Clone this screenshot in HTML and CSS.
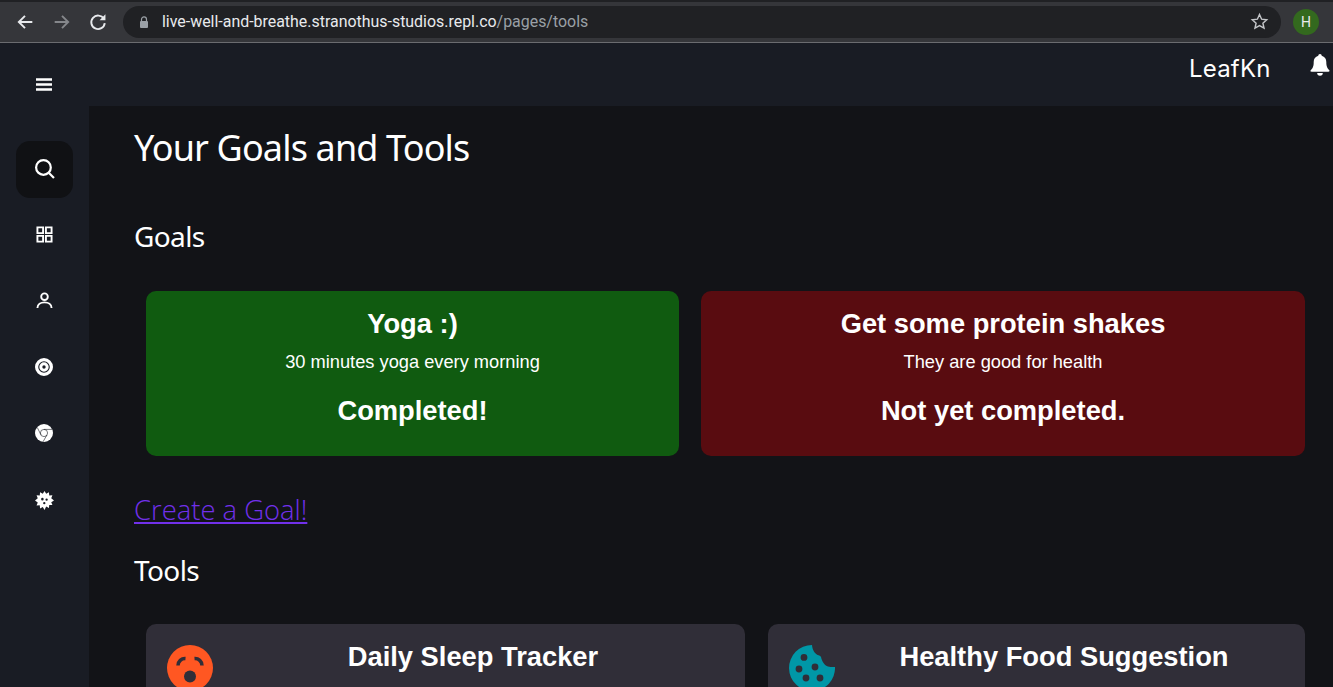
FILE: index.html
```html
<!DOCTYPE html>
<html lang="en">
<head>
<meta charset="utf-8">
<title>Your Goals and Tools</title>
<link rel="stylesheet" href="styles.css">
</head>
<body>
<header class="browser">
  <div class="nav-icons">
    <svg class="nav-icon" viewBox="0 0 16 16"><path d="M14.500 8H2.500M8 2.500L2.500 8L8 13.500"/></svg>
    <svg class="nav-icon dim" viewBox="0 0 16 16"><path d="M1.500 8H13.500M8 2.500L13.500 8L8 13.500"/></svg>
    <svg class="nav-icon" viewBox="0 0 16 16"><path d="M13.200 5.200A6 6 0 1 0 14 9"/><path class="solid" d="M14.600 1.200V6.400H9.400Z"/></svg>
  </div>
  <div class="address">
    <svg class="lock" viewBox="0 0 10 12"><path d="M2.500 5V3.400a2.500 2.500 0 0 1 5 0V5" fill="none" stroke="#9aa0a6" stroke-width="1.200"/><rect x="1" y="5" width="8" height="7" rx="1" fill="#9aa0a6"/></svg>
    <span class="url">live-well-and-breathe.stranothus-studios.repl.co<span class="url-path">/pages/tools</span></span>
    <svg class="star" viewBox="0 0 24 24"><path d="M12 3.200l2.700 5.900 6.400.7-4.800 4.300 1.400 6.300L12 17.100l-5.700 3.300 1.400-6.300-4.800-4.300 6.400-.7z"/></svg>
  </div>
  <div class="avatar">H</div>
</header>
<div class="app">
  <aside class="sidebar">
    <svg class="burger" viewBox="0 0 16 14"><path d="M0 1.500H16M0 6.500H16M0 11.500H16"/></svg>
    <nav class="side-nav">
      <a class="side-item active"><svg class="side-icon search" viewBox="0 0 20 20"><circle cx="9" cy="9" r="7"/><path d="M14 14l5 5"/></svg></a>
      <a class="side-item"><svg class="side-icon small" viewBox="0 0 18 18"><path d="M1.500 1.500h6v6h-6zM10.500 1.500h6v6h-6zM1.500 10.500h6v6h-6zM10.500 10.500h6v6h-6z"/></svg></a>
      <a class="side-item"><svg class="side-icon small" viewBox="0 0 18 18"><circle cx="9" cy="5" r="3.500"/><path d="M1.500 17c0-4 3.500-6 7.500-6s7.500 2 7.500 6"/></svg></a>
      <a class="side-item"><svg class="side-icon fill" viewBox="0 0 18 18"><path fill-rule="evenodd" d="M9 0a9 9 0 1 1 0 18A9 9 0 0 1 9 0zm0 3.200a5.800 5.800 0 1 0 0 11.600A5.800 5.800 0 0 0 9 3.200z"/><path fill-rule="evenodd" d="M9 4.300a4.700 4.700 0 1 1 0 9.400 4.700 4.700 0 0 1 0-9.400zm0 3a1.700 1.700 0 1 0 0 3.400 1.700 1.700 0 0 0 0-3.400z"/></svg></a>
      <a class="side-item"><svg class="side-icon fill" viewBox="0 0 18 18"><circle cx="9" cy="9" r="9"/><path class="chrome-lines" d="M9 5.400a3.600 3.600 0 1 1 0 7.200 3.600 3.600 0 0 1 0-7.200M9 5.400h8M5.900 10.800L2.300 3.500M11.900 11L8 17.800"/></svg></a>
      <a class="side-item"><svg class="side-icon gear" viewBox="0 0 18 18"><path fill-rule="evenodd" d="M9 0l1.600 2.600 2.600-1.300.3 2.900 3-.1-1.100 2.700L18 9l-2.600 1.600 1.100 2.700-3-.1-.3 2.900-2.600-1.300L9 18l-1.600-2.800-2.600 1.300-.3-2.900-3 .1 1.100-2.700L0 9l2.600-2.200L1.500 4.100l3 .1.300-2.900 2.600 1.300zM7 6.500a1.200 1.200 0 1 0 0 2.400 1.200 1.200 0 0 0 0-2.400zm4 .6a1.100 1.100 0 1 0 0 2.200 1.100 1.100 0 0 0 0-2.200zM8.800 10.400a1.100 1.100 0 1 0 0 2.200 1.100 1.100 0 0 0 0-2.200z"/></svg></a>
    </nav>
  </aside>
  <div class="body-col">
    <div class="topbar">
      <span class="brand">LeafKn</span>
      <svg class="bell" viewBox="0 0 20 22"><path d="M10 0a1.700 1.700 0 0 0-1.700 1.800C5.300 2.600 3.700 5 3.700 8c0 4.800-1 6-3 8.200-.5.600-.1 1.500.8 1.500h17c.9 0 1.300-.9.800-1.500-2-2.200-3-3.400-3-8.200 0-3-1.600-5.400-4.600-6.200A1.700 1.700 0 0 0 10 0z"/><path d="M7.200 19a2.800 2.800 0 0 0 5.600 0z"/></svg>
    </div>
    <main class="main">
      <h1 class="title">Your Goals and Tools</h1>
      <h2 class="section">Goals</h2>
      <section class="goals">
        <article class="goal done">
          <h3 class="card-title">Yoga :)</h3>
          <p class="card-text">30 minutes yoga every morning</p>
          <h3 class="goal-state">Completed!</h3>
        </article>
        <article class="goal todo">
          <h3 class="card-title">Get some protein shakes</h3>
          <p class="card-text">They are good for health</p>
          <h3 class="goal-state">Not yet completed.</h3>
        </article>
      </section>
      <a class="create" href="#">Create a Goal!</a>
      <h2 class="section tools-head">Tools</h2>
      <section class="tools">
        <article class="tool">
          <svg class="tool-icon" viewBox="0 0 46 46"><circle cx="23" cy="23" r="23" fill="#ff5722"/><circle cx="23" cy="31.500" r="6" fill="#302e38"/><path d="M11 20.500A7 7 0 0 1 18.500 13.500M35 20.500A7 7 0 0 0 27.500 13.500" fill="none" stroke="#302e38" stroke-width="3.500"/></svg>
          <h3 class="card-title tool-title">Daily Sleep Tracker</h3>
        </article>
        <article class="tool">
          <svg class="tool-icon" viewBox="0 0 46 46"><path fill="#0097a7" fill-rule="evenodd" d="M23 0c.3 5 2.800 9 6.500 10.300.8.300 1.800.6 2.500 1.700 1 4.500 3.500 8.500 7 9.500 2.300.6 5 .6 7 .5A23 23 0 1 1 23 0zM15 9a3.400 3.400 0 1 0 0 6.800A3.400 3.400 0 0 0 15 9zM10 20.600a3.400 3.400 0 1 0 0 6.800 3.400 3.400 0 0 0 0-6.800zM26 18.600a3.400 3.400 0 1 0 0 6.800 3.400 3.400 0 0 0 0-6.800zM17 29.600a3.400 3.400 0 1 0 0 6.800 3.400 3.400 0 0 0 0-6.800zM31 29.600a3.400 3.400 0 1 0 0 6.800 3.400 3.400 0 0 0 0-6.800z"/></svg>
          <h3 class="card-title tool-title">Healthy Food Suggestion</h3>
        </article>
      </section>
    </main>
  </div>
</div>
</body>
</html>
```

FILE: styles.css
```css
* { box-sizing: border-box; }
html, body { margin: 0; height: 100%; }
body {
  width: 1333px;
  height: 687px;
  overflow: hidden;
  display: flex;
  flex-direction: column;
  background: #121317;
  color: #fff;
  font-family: "Liberation Sans", sans-serif;
}
.browser {
  height: 43px;
  flex: none;
  display: flex;
  align-items: center;
  background: #35363a;
  border-top: 2px solid #202124;
  border-bottom: 1px solid #6b6c70;
  padding: 0 12px 1px 16px;
}
.nav-icons { display: flex; gap: 18px; width: 107px; flex: none; }
.nav-icon { width: 18px; height: 18px; fill: none; stroke: #e8eaed; stroke-width: 1.700; }
.nav-icon.dim { stroke: #85878b; margin-left: 1px; }
.nav-icon .solid { fill: #e8eaed; stroke: none; }
.address {
  width: 1158px;
  height: 32px;
  flex: none;
  display: flex;
  align-items: center;
  padding: 0 12px 0 16px;
  background: #202124;
  border-radius: 16px;
}
.lock { width: 10px; height: 12px; flex: none; margin-right: 13px; }
.url { font: 15.930px "Roboto", sans-serif; color: #e8eaed; flex: 1; white-space: nowrap; }
.url-path { color: #9aa0a6; }
.star { width: 19px; height: 19px; fill: none; stroke: #c4c6c9; stroke-width: 1.800; }
.avatar {
  width: 26px;
  height: 26px;
  flex: none;
  margin-left: 12px;
  border-radius: 50%;
  background: #33691e;
  color: #e8eaed;
  font: 14px/26px "Roboto", sans-serif;
  text-align: center;
}
.app { flex: 1; display: flex; min-height: 0; }
.sidebar {
  width: 89px;
  flex: none;
  display: flex;
  flex-direction: column;
  align-items: center;
  background: #191c24;
  padding: 35px 0 0;
}
.burger { width: 18px; height: 14px; fill: none; stroke: #fff; stroke-width: 2.500; margin-left: -1px; flex: none; }
.side-nav {
  display: flex;
  flex-direction: column;
  align-items: center;
  gap: 9px;
  margin-top: 49px;
  margin-left: -1px;
}
.side-item {
  width: 57px;
  height: 57px;
  display: flex;
  align-items: center;
  justify-content: center;
  border-radius: 14px;
}
.side-item.active { background: #101114; }
.side-icon { width: 20px; height: 20px; fill: none; stroke: #fff; stroke-width: 2; margin-top: -2px; }
.side-icon.search { width: 21px; height: 21px; stroke-width: 2.100; }
.side-icon.small { width: 17px; height: 17px; }
.side-icon.fill { width: 18px; height: 18px; fill: #fff; stroke: none; }
.side-icon.gear { width: 19px; height: 19px; fill: #fff; stroke: none; margin-top: 1px; }
.chrome-lines { fill: none; stroke: #191c24; stroke-width: .6; }
.body-col { flex: 1; min-width: 0; display: flex; flex-direction: column; }
.topbar {
  height: 63px;
  flex: none;
  display: flex;
  align-items: flex-start;
  background: #191c24;
  padding: 10px 0 0 1100px;
}
.brand { font: 24px/32px "Inter", sans-serif; font-weight: 400; letter-spacing: .2px; width: 121px; }
.bell { width: 20px; height: 22px; fill: #fff; margin-top: 1px; flex: none; }
.main { flex: 1; min-height: 0; overflow: hidden; padding: 0 28px 0 45px; }
.title { margin: 17px 0 0; font: 400 36px/50px "Noto Sans", sans-serif; letter-spacing: -.85px; }
.section { margin: 0; font: 400 28px/40px "Noto Sans", sans-serif; letter-spacing: -.6px; }
.title + .section { margin-top: 43px; }
.goals {
  display: grid;
  grid-template-columns: 533px 604px;
  gap: 22px;
  margin: 35px 0 0 12px;
}
.goal {
  height: 165px;
  border-radius: 10px;
  text-align: center;
  padding: 17px 10px 0;
}
.done { background: #105b10; }
.todo { background: #590c10; }
.card-title { margin: 0; font: 700 27.300px/32px "Liberation Sans", sans-serif; }
.card-text { margin: 10px 0 0; font: 18.250px/24px "Liberation Sans", sans-serif; }
.goal-state { margin: 21px 0 0; font: 700 27.300px/32px "Liberation Sans", sans-serif; }
.create {
  display: block;
  width: max-content;
  margin-top: 33px;
  font: 300 27.400px/42px "Open Sans", sans-serif;
  color: #7130ea;
}
.tools-head { margin-top: 19px; }
.tools {
  display: grid;
  grid-template-columns: 599px 537px;
  gap: 23px;
  margin: 34px 0 0 12px;
}
.tool {
  height: 120px;
  display: flex;
  align-items: flex-start;
  background: #302e38;
  border-radius: 10px;
  padding: 17px 12px 0 21px;
}
.tool-icon { width: 46px; height: 46px; flex: none; margin-top: 4px; }
.tool-title { flex: 1; text-align: center; }
```
